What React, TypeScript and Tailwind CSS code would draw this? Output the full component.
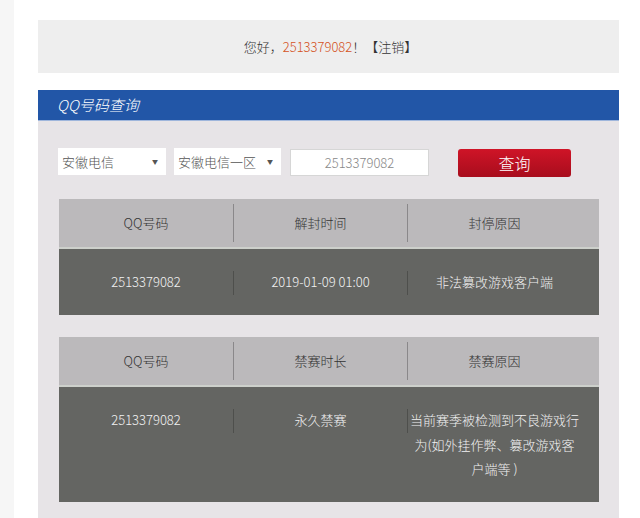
const FONT = '[font-family:"Microsoft_YaHei","Noto_Sans_CJK_SC",sans-serif]'

type Table = {
  heads: [string, string, string]
  cells: [string, string, string]
}

const TABLES: Table[] = [
  {
    heads: ['QQ号码', '解封时间', '封停原因'],
    cells: ['2513379082', '2019-01-09 01:00', '非法篡改游戏客户端'],
  },
  {
    heads: ['QQ号码', '禁赛时长', '禁赛原因'],
    cells: ['2513379082', '永久禁赛', '当前赛季被检测到不良游戏行\n为(如外挂作弊、篡改游戏客\n户端等 )'],
  },
]

function ResultTable({ heads, cells }: Table) {
  return (
    <div className="w-[540px]">
      <div className="grid h-[50px] grid-cols-[174px_174px_174px] border-b-2 border-[#cdd0cb] bg-[#bbb9bb] text-[13px] font-light text-[#333]">
        {heads.map((h, i) => (
          <div key={i} className="flex items-center">
            {i > 0 ? <span className="h-[38px] w-px bg-[#8a888a]" /> : null}
            <span className="flex-1 text-center">{h}</span>
          </div>
        ))}
      </div>
      <div className="grid grid-cols-[174px_174px_174px] bg-[#646562] pb-[20px] pt-[21px] text-[13px] font-light leading-[24.5px] text-[#f2f2f2]">
        {cells.map((c, i) => (
          <div key={i} className="flex items-start">
            {i > 0 ? <span className="mt-px h-[24px] w-px bg-[#4e4f4c]" /> : null}
            <span className="flex-1 whitespace-pre-line text-center">{c}</span>
          </div>
        ))}
      </div>
    </div>
  )
}

function Select({ label, w }: { label: string; w: string }) {
  return (
    <div className={`flex h-[27px] items-center justify-between bg-white pl-[4px] pr-[8px] text-[13px] font-light text-[#555] ${w}`}>
      <span>{label}</span>
      <span className="text-[6px] text-[#555]">▼</span>
    </div>
  )
}

export default function App() {
  return (
    <div className={`flex h-[518px] w-[640px] overflow-hidden bg-white ${FONT}`}>
      <div className="h-full w-[14px] shrink-0 bg-[#f6f6f6]" />
      <div className="ml-[24px] flex w-[581px] flex-col pt-[20px]">
        <div className="flex h-[53px] items-center justify-center bg-[#eeeeee] pl-[4px] text-[13px] font-light text-[#333]">
          您好，<span className="text-[#d4521c]">2513379082</span>！【注销】
        </div>

        <div className="mt-[17px] flex h-[31px] items-center border-b border-[#9fb6dc] bg-[#2256a7] pl-[19px] text-[15px] font-light italic text-white">
          QQ号码查询
        </div>

        <div className="flex flex-1 flex-col bg-[#e7e4e7] pl-[20px] pt-[27px]">
          <div className="flex items-start">
            <Select label="安徽电信" w="w-[108px]" />
            <div className="ml-[8px]">
              <Select label="安徽电信一区" w="w-[107px]" />
            </div>
            <div className="ml-[9px] mt-px flex h-[27px] w-[139px] items-center justify-center border border-[#d6d6d6] bg-white text-[13px] font-light text-[#888]">
              2513379082
            </div>
            <button
              type="button"
              className="ml-[29px] mt-px flex h-[28px] w-[113px] items-center justify-center rounded-[3px] bg-gradient-to-b from-[#cf1427] to-[#a80d1d] text-[16px] font-light text-white"
            >
              查询
            </button>
          </div>

          <div className="ml-px mt-[22px] flex flex-col gap-[22px]">
            {TABLES.map((t, i) => (
              <ResultTable key={i} {...t} />
            ))}
          </div>
        </div>
      </div>
    </div>
  )
}
